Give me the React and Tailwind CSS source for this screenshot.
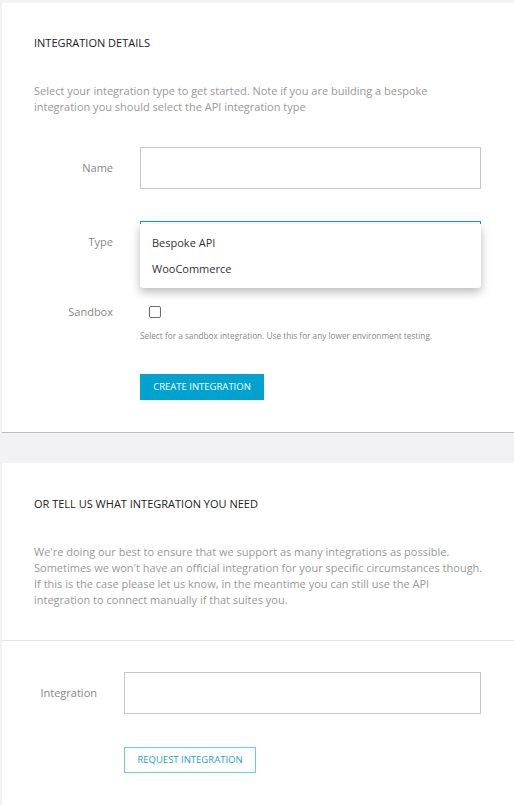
export default function App() {
  const font = { fontFamily: '"Open Sans", "Noto Sans", sans-serif' };
  return (
    <div className="min-h-[805px] w-[514px] bg-[#f2f2f4] pl-[2px] pt-[3px]" style={font}>
      {/* Card 1 */}
      <div className="border-b border-[#bcbcbc] bg-white pb-[32px] pl-[32px] pr-[33px] pt-[32px]">
        <h2 className="text-[11px] leading-[16px] text-[#222]">INTEGRATION DETAILS</h2>
        <p className="mt-[32px] text-[11px] leading-[16px] text-[#999]">
          <span className="whitespace-nowrap">Select your integration type to get started. Note if you are building a bespoke</span>
          <br />
          <span className="whitespace-nowrap">integration you should select the API integration type</span>
        </p>

        {/* Name */}
        <div className="mt-[32px] flex items-center">
          <label className="w-[79px] text-right text-[11px] leading-[16px] text-[#888]">Name</label>
          <div className="ml-[27px] h-[42px] flex-1 border border-[#c8c8c8] bg-white" />
        </div>

        {/* Type */}
        <div className="mt-[32px] flex items-center">
          <label className="w-[79px] text-right text-[11px] leading-[16px] text-[#888]">Type</label>
          <div className="relative ml-[27px] h-[42px] flex-1 border border-[#1a95c5] bg-white">
            <div className="absolute left-[-1px] right-[-1px] top-[2px] z-10 rounded-b-[3px] bg-white pb-[6px] pt-[6px] shadow-[0_4px_10px_rgba(0,0,0,0.28)]">
              <div className="px-[12px] text-[11px] leading-[26px] text-[#333]">Bespoke API</div>
              <div className="px-[12px] text-[11px] leading-[26px] text-[#333]">WooCommerce</div>
            </div>
          </div>
        </div>

        {/* Sandbox */}
        <div className="mt-[41px] flex items-center">
          <label className="w-[79px] text-right text-[11px] leading-[16px] text-[#888]">Sandbox</label>
          <div className="ml-[36px] h-[12px] w-[12px] rounded-[2px] border-[1.5px] border-[#6b6b6b]" />
        </div>
        <p className="ml-[106px] mt-[10px] whitespace-nowrap text-[8.25px] leading-[12px] text-[#888]">
          Select for a sandbox integration. Use this for any lower environment testing.
        </p>

        <div className="ml-[106px] mt-[30px]">
          <button className="h-[26px] w-[124px] bg-[#00a2cf] text-[9.5px] font-medium text-white">
            CREATE INTEGRATION
          </button>
        </div>
      </div>

      {/* Card 2 */}
      <div className="mt-[30px] bg-white pb-[32px] pt-[33px]">
        <div className="pl-[32px] pr-[33px]">
          <h2 className="text-[11px] leading-[16px] text-[#222]">OR TELL US WHAT INTEGRATION YOU NEED</h2>
          <p className="mt-[32px] text-[11px] leading-[16px] text-[#999]">
            <span className="whitespace-nowrap">We're doing our best to ensure that we support as many integrations as possible.</span>
            <br />
            <span className="whitespace-nowrap">Sometimes we won't have an official integration for your specific circumstances though.</span>
            <br />
            <span className="whitespace-nowrap">If this is the case please let us know, in the meantime you can still use the API</span>
            <br />
            <span className="whitespace-nowrap">integration to connect manually if that suites you.</span>
          </p>
        </div>
        <div className="mt-[32px] border-t border-[#e2e2e2]" />
        <div className="pl-[32px] pr-[33px]">
          <div className="mt-[31px] flex items-center">
            <label className="w-[63px] text-right text-[11px] leading-[16px] text-[#888]">Integration</label>
            <div className="ml-[27px] h-[42px] flex-1 border border-[#c8c8c8] bg-white" />
          </div>
          <div className="ml-[90px] mt-[31px]">
            <button className="h-[26px] w-[132px] border border-[#6ccae6] bg-white text-[9.5px] font-medium text-[#1ea2cc]">
              REQUEST INTEGRATION
            </button>
          </div>
        </div>
      </div>
    </div>
  );
}
